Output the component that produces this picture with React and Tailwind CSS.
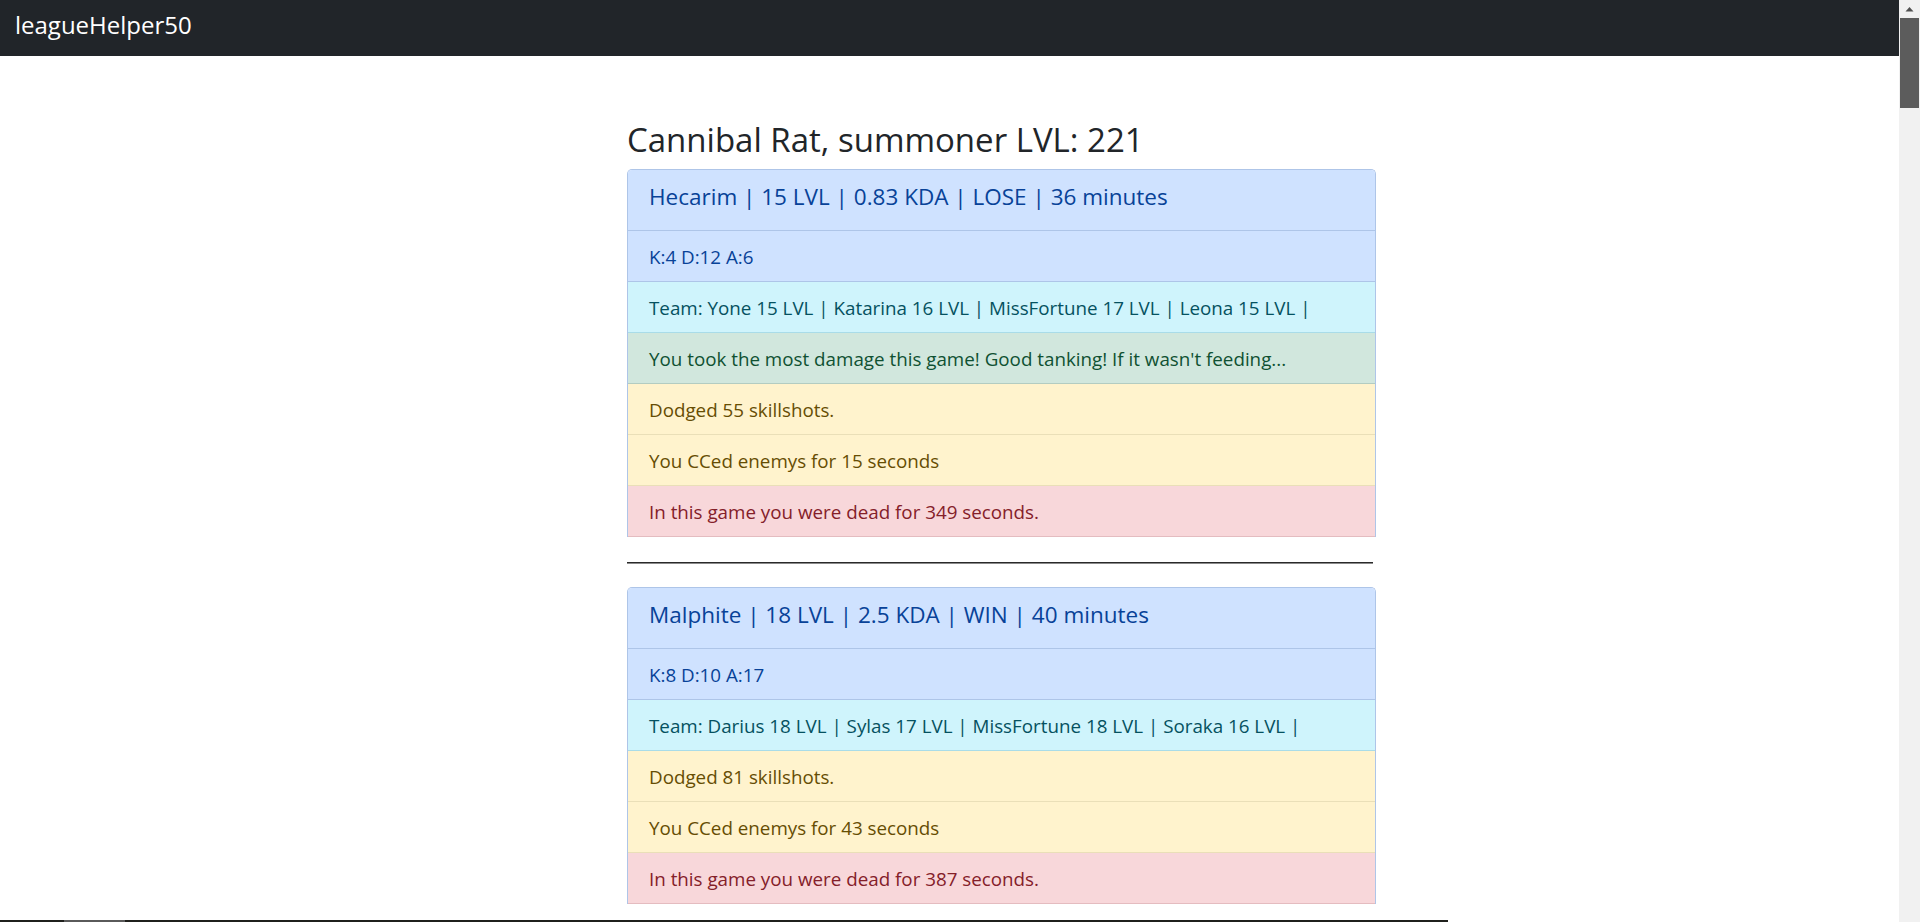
import React from 'react';

// match data shown on the summoner page
const matches = [
  {
    title: 'Hecarim | 15 LVL | 0.83 KDA | LOSE | 36 minutes',
    kda: 'K:4 D:12 A:6',
    team: 'Team: Yone 15 LVL | Katarina 16 LVL | MissFortune 17 LVL | Leona 15 LVL |',
    notes: [
      { tone: 'success', text: "You took the most damage this game! Good tanking! If it wasn't feeding..." },
      { tone: 'warning', text: 'Dodged 55 skillshots.' },
      { tone: 'warning', text: 'You CCed enemys for 15 seconds' },
      { tone: 'danger', text: 'In this game you were dead for 349 seconds.' },
    ],
  },
  {
    title: 'Malphite | 18 LVL | 2.5 KDA | WIN | 40 minutes',
    kda: 'K:8 D:10 A:17',
    team: 'Team: Darius 18 LVL | Sylas 17 LVL | MissFortune 18 LVL | Soraka 16 LVL |',
    notes: [
      { tone: 'warning', text: 'Dodged 81 skillshots.' },
      { tone: 'warning', text: 'You CCed enemys for 43 seconds' },
      { tone: 'danger', text: 'In this game you were dead for 387 seconds.' },
    ],
  },
];

const tones = {
  primary: 'bg-[#cfe2ff] text-[#084298] border-[#aec5e8]',
  info: 'bg-[#cff4fc] text-[#055160] border-[#a9dce8]',
  success: 'bg-[#d1e7dd] text-[#0f5132] border-[#b3ccc1]',
  warning: 'bg-[#fff3cd] text-[#664d03] border-[#eadfb8]',
  danger: 'bg-[#f8d7da] text-[#842029] border-[#e4bcc0]',
};

const Row = ({ tone, children }) => (
  <div className={`h-[51px] flex items-center px-[21px] pt-[2px] border-b text-[18.8px] ${tones[tone]}`}>
    {children}
  </div>
);

const MatchCard = ({ match }) => (
  <div className="rounded-t-[5px] overflow-hidden border-x border-t border-[#aec5e8]">
    <div className={`h-[61px] flex items-center px-[21px] pb-[6px] border-b text-[22.5px] ${tones.primary}`}>
      {match.title}
    </div>
    <Row tone="primary">{match.kda}</Row>
    <Row tone="info">{match.team}</Row>
    {match.notes.map((n, i) => (
      <Row key={i} tone={n.tone}>{n.text}</Row>
    ))}
  </div>
);

export default function App() {
  return (
    <div className="relative flex h-[922px] w-[1920px] overflow-hidden bg-white font-['Open_Sans','Noto_Sans',sans-serif] text-[#212529]">
      <div className="flex-1 flex flex-col">
        {/* Navbar */}
        <nav className="h-[56px] shrink-0 bg-[#212529] flex items-center px-[15px] pb-[7px]">
          <span className="text-white text-[24px]">leagueHelper50</span>
        </nav>

        <div className="ml-[627px] w-[749px]">
          <h2 className="mt-[63px] mb-[9px] text-[33px] leading-[41px]">Cannibal Rat, summoner LVL: 221</h2>

          <MatchCard match={matches[0]} />

          {/* underscore divider between matches */}
          <div className="mt-[25px] mb-[23px] h-[2px] w-[746px] border-t border-[#2a2a2a] bg-[#8a8a8a]" />

          <MatchCard match={matches[1]} />
        </div>
      </div>

      {/* Scrollbar */}
      <div className="w-[21px] shrink-0 bg-[#f1f1f1] flex flex-col">
        <div className="h-[18px] flex items-center justify-center">
          <svg width="9" height="6" viewBox="0 0 9 6">
            <path d="M0.5 5.5 L4.5 1 L8.5 5.5 Z" fill="#505050" />
          </svg>
        </div>
        <div className="h-[90px] mx-[1px] bg-[#5c5c5c]" />
      </div>

      {/* bottom strip */}
      <div className="absolute bottom-0 left-0 h-[2px] w-[1448px] bg-[#1f201c]">
        <div className="ml-[64px] w-[61px] h-full bg-[#5a5a5a]" />
      </div>
    </div>
  );
}
